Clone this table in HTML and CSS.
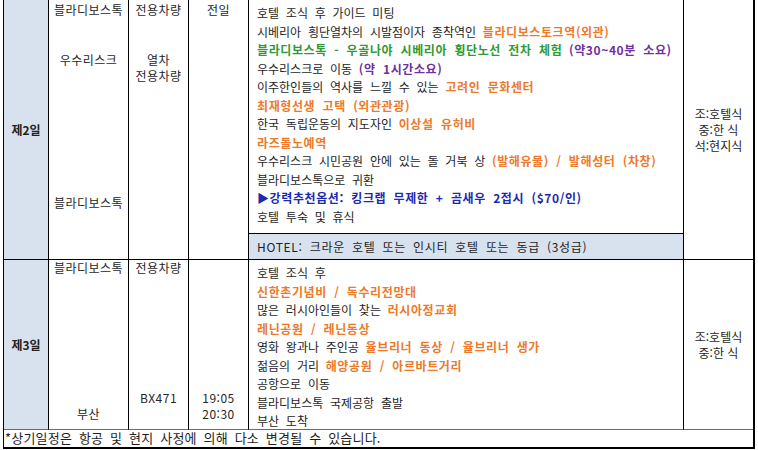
FILE: index.html
```html
<!DOCTYPE html>
<html lang="ko">
<head>
<meta charset="utf-8">
<title>일정표</title>
<link rel="stylesheet" href="styles.css">
</head>
<body>
<div class="sched">
  <!-- 제2일 -->
  <div class="cell day span2">제2일</div>
  <div class="cell side span2">
    <p class="first">블라디보스톡</p>
    <p class="gap-a">우수리스크</p>
    <p class="gap-b">블라디보스톡</p>
  </div>
  <div class="cell side span2">
    <p class="first">전용차량</p>
    <p class="gap-a">열차</p>
    <p>전용차량</p>
  </div>
  <div class="cell side span2">
    <p class="first">전일</p>
  </div>
  <div class="cell content r2">
    <p>호텔 조식 후 가이드 미팅</p>
    <p>시베리아 횡단열차의 시발점이자 종착역인 <span class="o">블라디보스토크역(외관)</span></p>
    <p><span class="g">블라디보스톡 - 우골나야 시베리아 횡단노선 전차 체험</span> <span class="p">(약30~40분 소요)</span></p>
    <p>우수리스크로 이동 <span class="p">(약 1시간소요)</span></p>
    <p>이주한인들의 역사를 느낄 수 있는 <span class="o">고려인 문화센터</span></p>
    <p><span class="o">최재형선생 고택 (외관관광)</span></p>
    <p>한국 독립운동의 지도자인 <span class="o">이상설 유허비</span></p>
    <p><span class="o">라즈돌노예역</span></p>
    <p>우수리스크 시민공원 안에 있는 돌 거북 상 <span class="o">(발해유물) / 발해성터 (차창)</span></p>
    <p>블라디보스톡으로 귀환</p>
    <p><span class="b">▶강력추천옵션: 킹크랩 무제한 + 곰새우 2접시 ($70/인)</span></p>
    <p>호텔 투숙 및 휴식</p>
  </div>
  <div class="cell meal span2">
    <p>조:호텔식</p>
    <p>중:한 식</p>
    <p>석:현지식</p>
  </div>
  <div class="cell hotel">HOTEL: 크라운 호텔 또는 인시티 호텔 또는 동급 (3성급)</div>

  <!-- 제3일 -->
  <div class="cell day last">제3일</div>
  <div class="cell side split last">
    <p>블라디보스톡</p>
    <p>부산</p>
  </div>
  <div class="cell side split last">
    <p>전용차량</p>
    <div>
      <p>BX471</p>
      <p>&nbsp;</p>
    </div>
  </div>
  <div class="cell side split last">
    <p>&nbsp;</p>
    <div>
      <p>19:05</p>
      <p>20:30</p>
    </div>
  </div>
  <div class="cell content r3 last">
    <p>호텔 조식 후</p>
    <p><span class="o">신한촌기념비 / 독수리전망대</span></p>
    <p>많은 러시아인들이 찾는 <span class="o">러시아정교회</span></p>
    <p><span class="o">레닌공원 / 레닌동상</span></p>
    <p>영화 왕과나 주인공 <span class="o">율브리너 동상 / 율브리너 생가</span></p>
    <p>젊음의 거리 <span class="o">해양공원 / 아르바트거리</span></p>
    <p>공항으로 이동</p>
    <p>블라디보스톡 국제공항 출발</p>
    <p>부산 도착</p>
  </div>
  <div class="cell meal last">
    <p>조:호텔식</p>
    <p>중:한 식</p>
  </div>

  <div class="note">*상기일정은 항공 및 현지 사정에 의해 다소 변경될 수 있습니다.</div>
</div>
</body>
</html>
```

FILE: styles.css
```css
* { box-sizing: border-box; }

html, body {
  margin: 0;
  padding: 0;
  background: #ffffff;
}

body {
  font-family: "Noto Sans CJK KR", "Noto Sans", sans-serif;
  font-size: 12px;
  color: #1e1e1e;
  width: 758px;
  height: 450px;
  overflow: hidden;
}

p { margin: 0; }

.sched {
  display: grid;
  grid-template-columns: 45px 80px 60px 60px 435px 69px;
  grid-template-rows: 234px 26px 170px 17px;
  width: 752px;
  margin-left: 3px;
  border-left: 1px solid #000;
  border-right: 2px solid #000;
  border-bottom: 2px solid #000;
}

.cell {
  border-right: 1px solid #000;
  border-bottom: 1px solid #000;
  line-height: 16px;
  white-space: nowrap;
}

.cell.last { border-bottom-color: #6a6a6a; }

.span2 { grid-row: span 2; }

.day {
  background: #d8e2ef;
  display: flex;
  align-items: center;
  justify-content: center;
  font-weight: 700;
  color: #222;
}

.side {
  text-align: center;
  color: #262626;
  letter-spacing: 0.5px;
}

.side .first { margin-top: 2px; }
.side .gap-a { margin-top: 34px; }
.side .gap-b { margin-top: 127px; }

.split {
  display: flex;
  flex-direction: column;
  justify-content: space-between;
  padding-bottom: 7px;
}

.content {
  padding-left: 8px;
  line-height: 18.5px;
  word-spacing: 3.4px;
}

.content.r2 { padding-top: 4px; }
.content.r3 { padding-top: 4px; }

.meal {
  border-right: none;
  display: flex;
  flex-direction: column;
  justify-content: center;
  align-items: center;
  color: #262626;
}

.hotel {
  background: #d8e2ef;
  padding-left: 8px;
  display: flex;
  align-items: center;
  word-spacing: 3px;
  letter-spacing: 0.7px;
}

.note {
  grid-column: 1 / -1;
  padding-left: 1px;
  font-size: 13px;
  line-height: 16px;
  word-spacing: 3px;
  letter-spacing: 0.2px;
  white-space: nowrap;
}

.o, .g, .p, .b {
  font-weight: 700;
  letter-spacing: 0.6px;
}

.o { color: #ec7a2a; }
.g { color: #2f9a35; }
.p { color: #7030a0; }
.b { color: #1b2bb0; }
```
